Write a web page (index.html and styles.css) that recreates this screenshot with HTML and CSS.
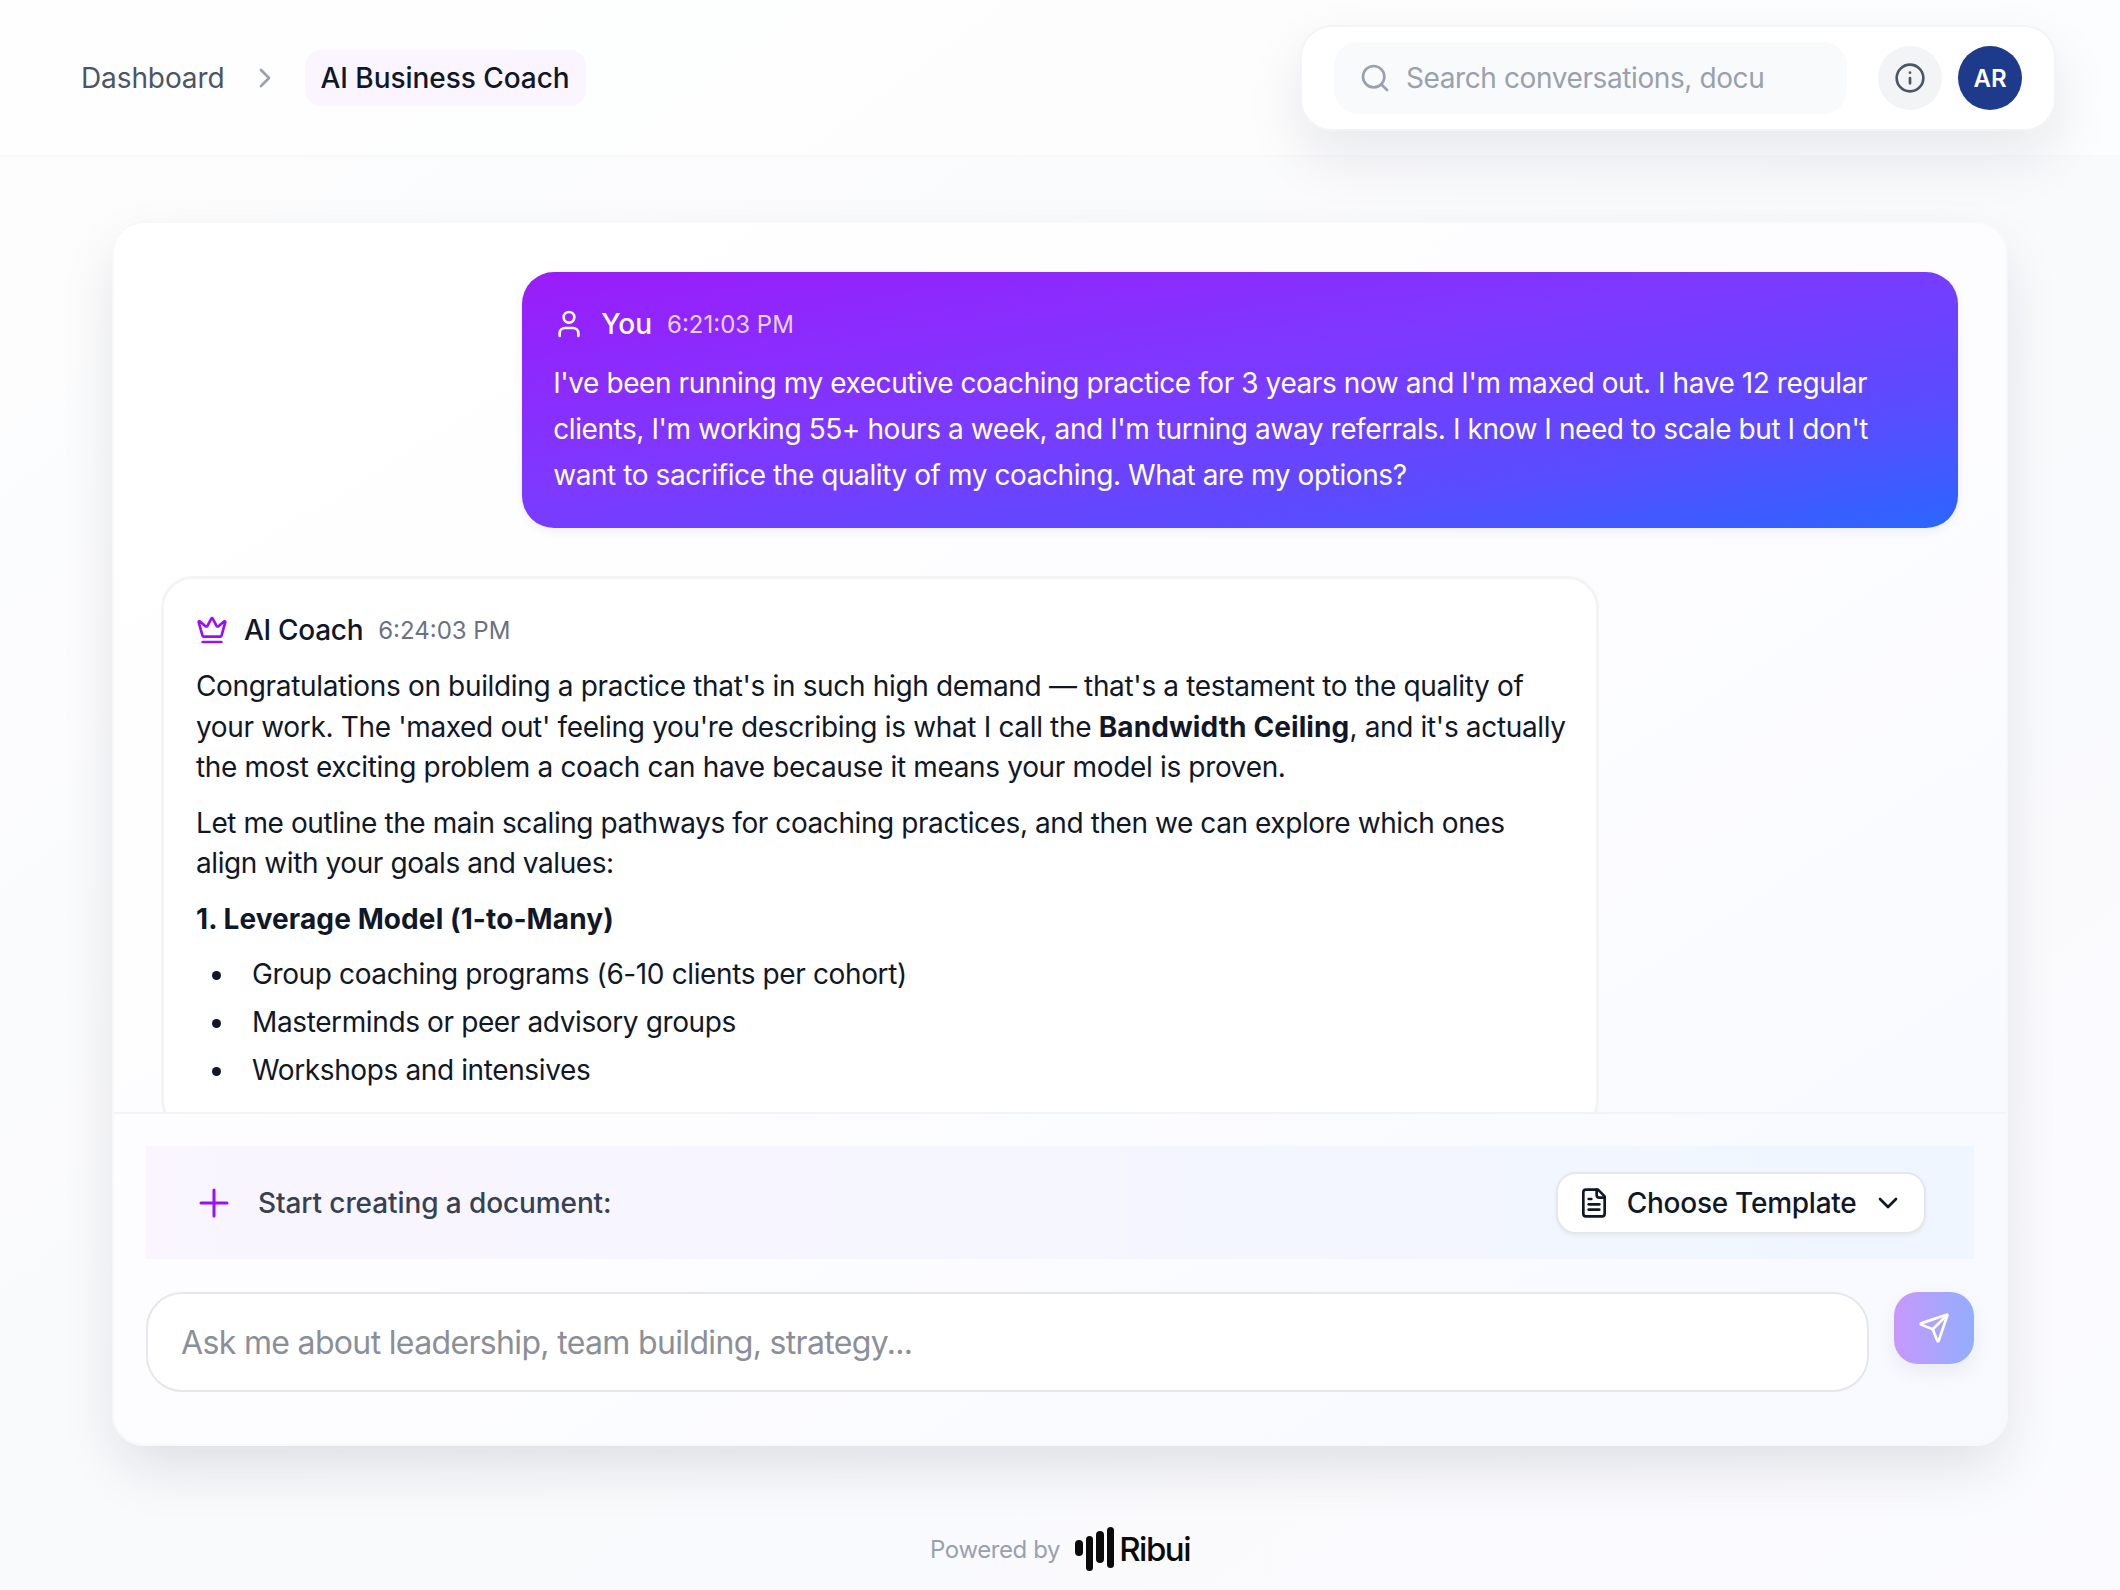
FILE: index.html
```html
<!DOCTYPE html>
<html lang="en">
<head>
<meta charset="UTF-8">
<title>AI Business Coach</title>
<link rel="stylesheet" href="styles.css">
</head>
<body>

<header class="topbar">
    <nav class="crumbs">
        <a href="javascript:;" class="crumb-link">Dashboard</a>
        <svg class="icon crumb-sep" viewBox="0 0 24 24"><path d="m9 18 6-6-6-6"/></svg>
        <span class="crumb-current">AI Business Coach</span>
    </nav>
    <div class="tools">
        <label class="search">
            <svg class="icon search-icon" viewBox="0 0 24 24"><path d="m21 21-4.34-4.34"/><circle cx="11" cy="11" r="8"/></svg>
            <input class="search-input" type="text" placeholder="Search conversations, documents...">
        </label>
        <a href="javascript:;" class="info-btn">
            <svg class="icon" viewBox="0 0 24 24"><circle cx="12" cy="12" r="10"/><path d="M12 16v-4"/><path d="M12 8h.01"/></svg>
        </a>
        <a href="javascript:;" class="avatar">AR</a>
    </div>
</header>

<main class="page">
    <section class="chat">
        <div class="messages">
            <article class="bubble bubble-user">
                <div class="bubble-head">
                    <svg class="icon" viewBox="0 0 24 24"><path d="M19 21v-2a4 4 0 0 0-4-4H9a4 4 0 0 0-4 4v2"/><circle cx="12" cy="7" r="4"/></svg>
                    <span class="bubble-name">You</span>
                    <span class="bubble-time">6:21:03 PM</span>
                </div>
                <p class="user-text">I've been running my executive coaching practice for 3 years now and I'm maxed out. I have 12 regular clients, I'm working 55+ hours a week, and I'm turning away referrals. I know I need to scale but I don't want to sacrifice the quality of my coaching. What are my options?</p>
            </article>

            <article class="bubble bubble-coach">
                <div class="bubble-head">
                    <svg class="icon crown" viewBox="0 0 24 24"><path d="M11.562 3.266a.5.5 0 0 1 .876 0L15.39 8.87a1 1 0 0 0 1.516.294L21.183 5.5a.5.5 0 0 1 .798.519l-2.834 10.246a1 1 0 0 1-.956.734H5.81a1 1 0 0 1-.957-.734L2.02 6.02a.5.5 0 0 1 .798-.519l4.276 3.664a1 1 0 0 0 1.516-.294z"/><path d="M5 21h14"/></svg>
                    <span class="bubble-name">AI Coach</span>
                    <span class="bubble-time">6:24:03 PM</span>
                </div>
                <p class="coach-text">Congratulations on building a practice that's in such high demand — that's a testament to the quality of your work. The 'maxed out' feeling you're describing is what I call the <strong>Bandwidth Ceiling</strong>, and it's actually the most exciting problem a coach can have because it means your model is proven.</p>
                <p class="coach-text">Let me outline the main scaling pathways for coaching practices, and then we can explore which ones align with your goals and values:</p>
                <p class="coach-text"><strong>1. Leverage Model (1-to-Many)</strong></p>
                <ul class="coach-list">
                    <li>Group coaching programs (6-10 clients per cohort)</li>
                    <li>Masterminds or peer advisory groups</li>
                    <li>Workshops and intensives</li>
                </ul>
            </article>
        </div>

        <div class="composer">
            <div class="doc-bar">
                <div class="doc-label">
                    <svg class="plus" viewBox="0 0 32 32"><path d="M16 3v26M3 16h26"/></svg>
                    <span>Start creating a document:</span>
                </div>
                <a href="javascript:;" class="template-btn">
                    <svg class="icon" viewBox="0 0 24 24"><path d="M15 2H6a2 2 0 0 0-2 2v16a2 2 0 0 0 2 2h12a2 2 0 0 0 2-2V7Z"/><path d="M14 2v4a2 2 0 0 0 2 2h4"/><path d="M10 9H8"/><path d="M16 13H8"/><path d="M16 17H8"/></svg>
                    <span class="template-label">Choose Template</span>
                    <svg class="icon" viewBox="0 0 24 24"><path d="m6 9 6 6 6-6"/></svg>
                </a>
            </div>
            <div class="ask-row">
                <input class="ask-input" type="text" placeholder="Ask me about leadership, team building, strategy...">
                <a href="javascript:;" class="send-btn">
                    <svg class="icon" viewBox="0 0 24 24"><path d="M14.536 21.686a.5.5 0 0 0 .937-.024l6.5-19a.496.496 0 0 0-.635-.635l-19 6.5a.5.5 0 0 0-.024.937l7.93 3.18a2 2 0 0 1 1.112 1.11z"/><path d="m21.854 2.147-10.94 10.939"/></svg>
                </a>
            </div>
        </div>
    </section>
</main>

<footer class="powered">
    <span>Powered by</span>
    <span class="brand">
        <span class="brand-bars">
            <i class="bar bar-1"></i>
            <i class="bar bar-2"></i>
            <i class="bar bar-3"></i>
            <i class="bar bar-4"></i>
        </span>
        <span class="brand-name">Ribui</span>
    </span>
</footer>

</body>
</html>
```

FILE: styles.css
```css
html,body,div,ul,li,p{
    margin:0;
    padding:0;
}
ul,li{list-style: none;}
a{text-decoration: none;color: inherit;}
body{
    width: 2120px;
    height: 1590px;
    overflow: hidden;
    display: flex;
    flex-direction: column;
    font-family: Inter, "Liberation Sans", sans-serif;
    font-size: 28px;
    color: #101828;
    background: linear-gradient(to bottom right, #fdfdfe, #f9fafc 50%, #fbfbff);
}
.icon{
    width: 32px;
    height: 32px;
    flex: none;
    fill: none;
    stroke: currentColor;
    stroke-width: 2;
    stroke-linecap: round;
    stroke-linejoin: round;
}

/* top bar */
.topbar{
    height: 157px;
    flex: none;
    box-sizing: border-box;
    padding: 1px 64px 0 81px;
    display: flex;
    align-items: center;
    justify-content: space-between;
    background: rgba(255,255,255,.5);
    border-bottom: 2px solid #f8f9fb;
}
.crumbs{
    display: flex;
    align-items: center;
}
.crumb-link{
    color: #4a5565;
    letter-spacing: -.1px;
}
.crumb-sep{
    color: #99a1af;
    margin: 0 24px 0 24px;
}
.crumb-current{
    height: 56px;
    line-height: 56px;
    padding: 0 16px;
    border-radius: 16px;
    background: #faf5ff;
    font-weight: 500;
    letter-spacing: -.05px;
}
.tools{
    display: flex;
    align-items: center;
    height: 106px;
    box-sizing: border-box;
    padding: 0 32px;
    background: #fff;
    border: 2px solid #f3f4f6;
    border-radius: 32px;
    box-shadow: 0 25px 60px rgba(16,24,40,.09);
}
.search{
    width: 513px;
    height: 72px;
    box-sizing: border-box;
    padding-left: 22px;
    display: flex;
    align-items: center;
    gap: 18px;
    border-radius: 24px;
    background: #f9fafb;
    color: #99a1af;
}
.search-icon{margin-left: 3px;margin-right: -3px;}
.search-input{
    width: 360px;
    padding: 0;
    border: none;
    outline: none;
    background: none;
    font: inherit;
    letter-spacing: -.4px;
}
.search-input::placeholder{color: #99a1af;opacity: 1;}
.info-btn{
    width: 64px;
    height: 64px;
    margin-left: 31px;
    display: flex;
    align-items: center;
    justify-content: center;
    border-radius: 50%;
    background: #f3f4f6;
    color: #4a5565;
}
.avatar{
    width: 64px;
    height: 64px;
    margin-left: 16px;
    display: flex;
    align-items: center;
    justify-content: center;
    border-radius: 50%;
    background: #1e3a8a;
    color: #fff;
    font-size: 24px;
    font-weight: 600;
}

/* chat card */
.page{
    flex: none;
    padding: 64px 112px 0;
}
.chat{
    height: 1225px;
    box-sizing: border-box;
    display: flex;
    flex-direction: column;
    overflow: hidden;
    border: 2px solid #f7f8fa;
    border-radius: 32px;
    background: linear-gradient(to bottom right, #fff, #fdfdff 50%, #f7f9ff);
    box-shadow: 0 25px 60px -8px rgba(16,24,40,.13);
}
.messages{
    flex: 1;
    min-height: 0;
    overflow: hidden;
    padding: 49px 48px 48px 47px;
    display: flex;
    flex-direction: column;
    gap: 48px;
}
.bubble{
    flex: none;
    box-sizing: border-box;
    border-radius: 32px;
}
.bubble-head{
    display: flex;
    align-items: center;
    height: 40px;
}
.bubble-name{
    margin-left: 16px;
    font-weight: 500;
}
.bubble-time{
    margin-left: 15px;
    font-size: 24px;
}
.bubble-user{
    width: 79.9%;
    align-self: flex-end;
    padding: 32px 32px 30px 31px;
    color: #fff;
    background: linear-gradient(to bottom right, #9a1cfa, #7c3aff 45%, #5a4cff 75%, #2a66ff);
    box-shadow: 0 4px 10px rgba(16,24,40,.06);
}
.bubble-user .bubble-time{color: rgba(255,255,255,.8);}
.user-text{
    margin-top: 16px;
    line-height: 46px;
    letter-spacing: -.42px;
}
.bubble-coach{
    width: 80%;
    border: 3px solid #f3f4f6;
    background: #fff;
    padding: 31px 24px 31px 32px;
}
.bubble-coach .bubble-name{letter-spacing: -.3px;}
.bubble-coach .bubble-time{color: #6a7282;}
.crown{color: #9810fa;}
.coach-text{
    margin-top: 15px;
    line-height: 40.5px;
    letter-spacing: -.34px;
}
.bubble-head + .coach-text{margin-top: 16px;}
.coach-text + .coach-text{letter-spacing: -.42px;}
.coach-text strong{
    font-weight: 700;
    letter-spacing: .1px;
}
.coach-list{margin-top: 15px;}
.coach-list li{
    position: relative;
    padding-left: 56px;
    margin-bottom: 7.5px;
    line-height: 40.5px;
    letter-spacing: -.38px;
}
.coach-list li:before{
    content: '';
    position: absolute;
    left: 16px;
    top: 17px;
    width: 9px;
    height: 9px;
    border-radius: 50%;
    background: #101828;
}

/* composer */
.composer{
    flex: none;
    padding: 32px 32px 52px;
    border-top: 2px solid #f3f4f6;
}
.doc-bar{
    height: 113px;
    box-sizing: border-box;
    padding: 0 48px 0 55px;
    display: flex;
    align-items: center;
    justify-content: space-between;
    background: linear-gradient(to right, #faf5ff, #eff6ff);
}
.doc-label{
    display: flex;
    align-items: center;
    gap: 28px;
    color: #364153;
    font-weight: 500;
    letter-spacing: -.1px;
}
.plus{
    width: 32px;
    height: 32px;
    margin-left: -3px;
    fill: none;
    stroke: #9810fa;
    stroke-width: 3;
    stroke-linecap: round;
}
.template-btn{
    height: 62px;
    box-sizing: border-box;
    padding: 0 20px 0 20px;
    display: flex;
    align-items: center;
    border: 2px solid #e5e7eb;
    border-radius: 20px;
    background: #fff;
    box-shadow: 0 2px 4px rgba(16,24,40,.05);
    font-weight: 500;
}
.template-label{
    margin: 0 15.5px 0 17px;
    letter-spacing: -.25px;
}
.ask-row{
    margin-top: 33px;
    display: flex;
    align-items: flex-start;
    gap: 25px;
}
.ask-input{
    flex: 1;
    min-width: 0;
    height: 100px;
    box-sizing: border-box;
    padding: 0 33px;
    border: 2px solid #e5e7eb;
    border-radius: 36px;
    outline: none;
    background: #fff;
    font-family: inherit;
    font-size: 32px;
    letter-spacing: -.66px;
}
.ask-input::placeholder{color: #8b8f98;opacity: 1;}
.send-btn{
    width: 80px;
    height: 72px;
    flex: none;
    display: flex;
    align-items: center;
    justify-content: center;
    border-radius: 24px;
    color: #fff;
    background: linear-gradient(to right, #c898fc, #92aefd);
    box-shadow: 0 8px 20px rgba(16,24,40,.06);
}

/* footer */
.powered{
    flex: 1;
    display: flex;
    align-items: center;
    justify-content: center;
    gap: 15px;
    padding-top: 62px;
    font-size: 24px;
    letter-spacing: -.4px;
    color: #99a1af;
}
.brand{
    display: flex;
    align-items: center;
    color: #0a0a0a;
}
.brand-bars{
    display: flex;
    align-items: flex-start;
    gap: 3px;
    height: 44px;
}
.bar{
    display: block;
    width: 7.5px;
    border-radius: 4px;
    background: #0a0a0a;
}
.bar-1{height: 16px;margin-top: 13px;}
.bar-2{height: 35px;margin-top: 9px;}
.bar-3{height: 32px;margin-top: 4px;}
.bar-4{height: 41px;}
.brand-name{
    margin-left: 5px;
    font-size: 33px;
    font-weight: 500;
    letter-spacing: -1.5px;
    line-height: 1;
}
```
